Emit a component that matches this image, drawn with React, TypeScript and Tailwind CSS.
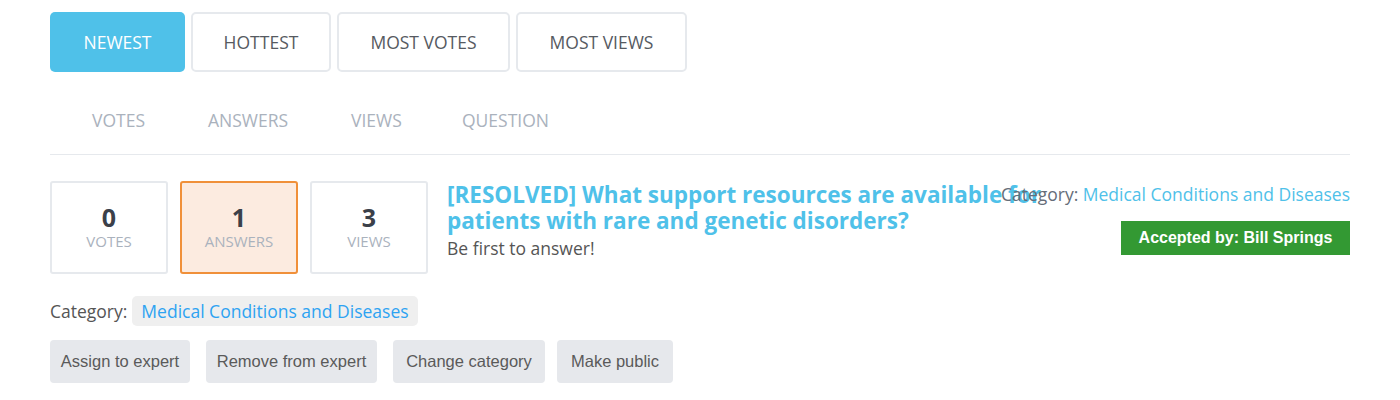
import React from "react";

const tabs = [
  { label: "Newest", w: "w-[135px]" },
  { label: "Hottest", w: "w-[140px]" },
  { label: "Most votes", w: "w-[173px]" },
  { label: "Most views", w: "w-[171px]" },
];
const cols = [
  { label: "Votes", w: "w-[116px]" },
  { label: "Answers", w: "w-[143px]" },
  { label: "Views", w: "w-[111px]" },
  { label: "Question", w: "w-auto" },
];
const actions = [
  { label: "Assign to expert", w: "w-[140px] mr-[16px]" },
  { label: "Remove from expert", w: "w-[171px] mr-[16px]" },
  { label: "Change category", w: "w-[152px] mr-[12px]" },
  { label: "Make public", w: "w-[116px]" },
];

const StatBox: React.FC<{ n: number; label: string; active?: boolean }> = ({ n, label, active }) => (
  <div
    className={
      "w-[118px] h-[93px] rounded-[3px] border-2 flex flex-col items-center justify-center pb-[2px] " +
      (active ? "border-[#f0903a] bg-[#fcebe0]" : "border-[#e6e9ed] bg-white")
    }
  >
    <span className="text-[25px] leading-[28px] font-bold text-[#3b4049]">{n}</span>
    <span className="text-[15px] leading-[20px] uppercase text-[#aab2bd]">{label}</span>
  </div>
);

export default function App() {
  return (
    <div className="bg-white w-[1400px] h-[400px] px-[50px] pt-[12px] font-['Open_Sans',sans-serif]">
      {/* sort tabs */}
      <div className="flex gap-[6px]">
        {tabs.map((t, i) => (
          <button
            key={t.label}
            className={
              "h-[60px] rounded-[5px] text-[17.5px] uppercase " +
              t.w +
              (i === 0 ? " bg-[#4fc1e9] text-white" : " border-2 border-[#e6e9ed] text-[#565a61] bg-white")
            }
          >
            {t.label}
          </button>
        ))}
      </div>

      {/* column headers */}
      <div className="flex items-center h-[83px] pt-[14px] pl-[42px] border-b border-[#e6e9ed]">
        {cols.map((c) => (
          <span key={c.label} className={"text-[17.5px] uppercase text-[#aab2bd] " + c.w}>
            {c.label}
          </span>
        ))}
      </div>

      {/* question row */}
      <div className="relative flex gap-[12px] mt-[26px]">
        <StatBox n={0} label="Votes" />
        <StatBox n={1} label="Answers" active />
        <StatBox n={3} label="Views" />
        <div className="ml-[7px] w-[600px] pt-[1px]">
          <h2 className="text-[22.5px] leading-[26px] font-bold text-[#4fc1e9]">
            [RESOLVED] What support resources are available for patients with rare and genetic disorders?
          </h2>
          <p className="text-[17.5px] leading-[24px] text-[#555] mt-[2px]">Be first to answer!</p>
        </div>
        <div className="absolute right-0 top-[1px] flex flex-col items-end">
          <div className="text-[17.5px] leading-[24px]">
            <span className="text-[#656d78]">Category: </span>
            <span className="text-[#4fc1e9]">Medical Conditions and Diseases</span>
          </div>
          <div className="mt-[15px] h-[34px] w-[229px] bg-[#339933] text-white text-[16px] font-bold flex items-center justify-center font-['Liberation_Sans',Arial,sans-serif]">
            Accepted by: Bill Springs
          </div>
        </div>
      </div>

      {/* category chip */}
      <div className="flex items-center mt-[22px] text-[17.5px]">
        <span className="text-[#555] mr-[5px]">Category:</span>
        <span className="h-[30px] px-[9px] rounded-[5px] bg-[#efefef] text-[#2ea3f2] flex items-center">
          Medical Conditions and Diseases
        </span>
      </div>

      {/* admin actions */}
      <div className="flex mt-[14px] font-['Liberation_Sans',Arial,sans-serif]">
        {actions.map((a) => (
          <button
            key={a.label}
            className={"h-[43px] rounded-[4px] bg-[#e6e8ec] text-[#5a5a5a] text-[16.5px] " + a.w}
          >
            {a.label}
          </button>
        ))}
      </div>
    </div>
  );
}
